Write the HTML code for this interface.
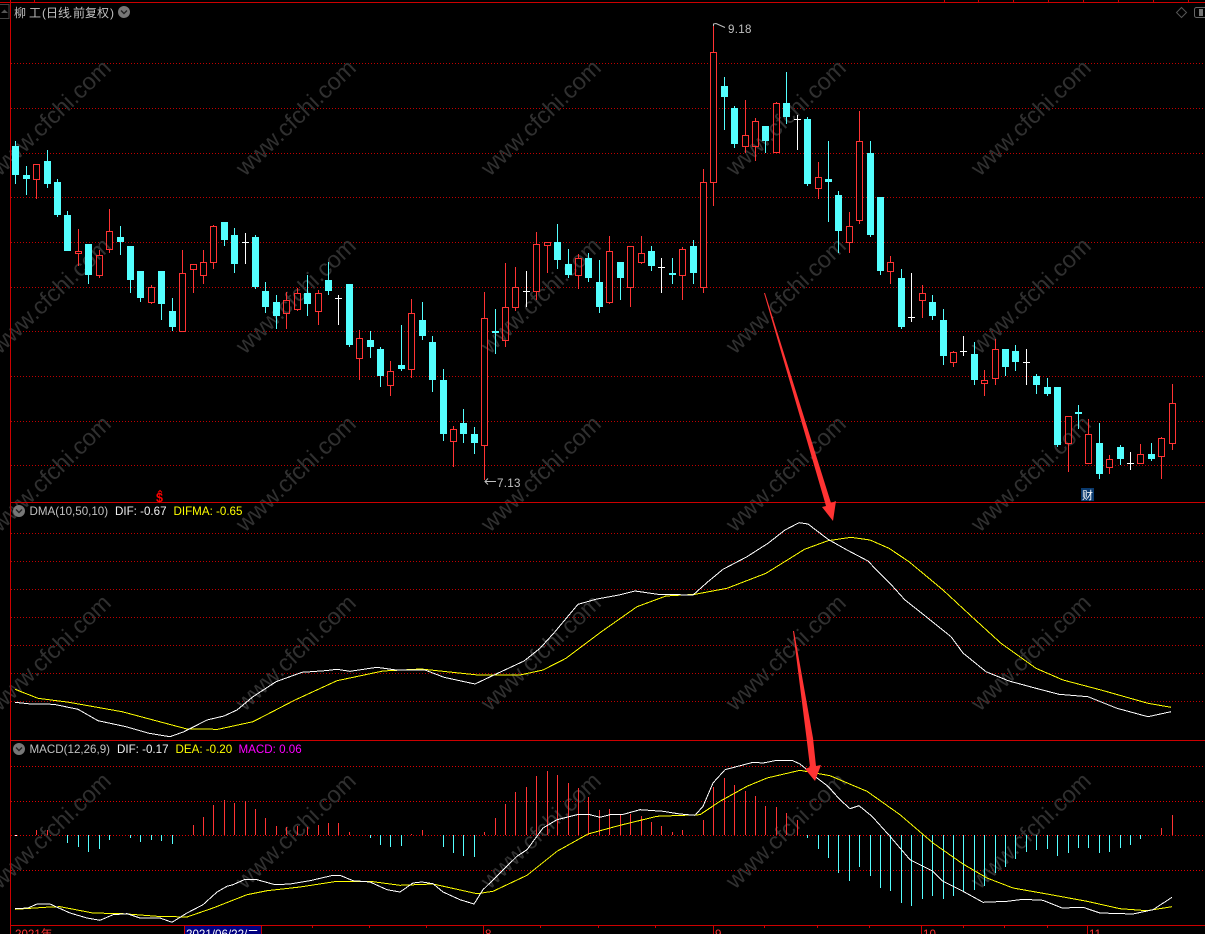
<!DOCTYPE html>
<html><head><meta charset="utf-8"><title>柳工</title>
<style>html,body{margin:0;padding:0;background:#000;overflow:hidden}svg{display:block}
text{font-family:"Liberation Sans","WenQuanYi Zen Hei","Noto Sans CJK SC",sans-serif;font-size:11.6px}
.wm text{font-size:23.5px;fill:#303030}</style></head>
<body>
<svg width="1205" height="934" viewBox="0 0 1205 934" xmlns="http://www.w3.org/2000/svg">
<rect width="1205" height="934" fill="#000"/>
<defs>
<path id="rb" d="M33.5 164.5h6v15h-6zM75.5 251.5h6v2h-6zM96.5 255.5h6v20h-6zM106.5 231.5h6v18h-6zM148.5 287.5h6v15h-6zM179.5 273.5h6v58h-6zM190.5 264.5h6v5h-6zM200.5 262.5h6v13h-6zM210.5 226.5h6v36h-6zM283.5 300.5h6v13h-6zM294.5 293.5h6v16h-6zM315.5 293.5h6v18h-6zM356.5 338.5h6v20h-6zM387.5 371.5h6v14h-6zM408.5 313.5h6v56h-6zM450.5 429.5h6v12h-6zM481.5 318.5h6v127h-6zM502.5 307.5h6v33h-6zM512.5 287.5h6v20h-6zM533.5 244.5h6v47h-6zM544.5 242.5h6v3h-6zM575.5 258.5h6v17h-6zM606.5 251.5h6v51h-6zM627.5 246.5h6v41h-6zM638.5 253.5h6v9h-6zM679.5 249.5h6v26h-6zM700.5 182.5h6v105h-6zM710.5 52.5h6v130h-6zM742.5 135.5h6v11h-6zM752.5 121.5h6v25h-6zM773.5 103.5h6v49h-6zM815.5 177.5h6v11h-6zM846.5 226.5h6v16h-6zM856.5 141.5h6v79h-6zM887.5 262.5h6v9h-6zM919.5 293.5h6v7h-6zM950.5 352.5h6v10h-6zM981.5 380.5h6v3h-6zM992.5 349.5h6v29h-6zM1065.5 416.5h6v27h-6zM1085.5 434.5h6v29h-6zM1106.5 459.5h6v8h-6zM1137.5 454.5h6v9h-6zM1158.5 438.5h6v18h-6zM1169.5 403.5h6v40h-6z"/>
</defs>

<!-- grid -->
<g stroke="#c00000" stroke-width="1" stroke-dasharray="1 2" fill="none" shape-rendering="crispEdges">
<path d="M11 63.5H1205M11 108.5H1205M11 153.5H1205M11 197.5H1205M11 242.5H1205M11 287.5H1205M11 331.5H1205M11 376.5H1205M11 421.5H1205M11 465.5H1205"/>
<path d="M11 533.5H1205M11 561.5H1205M11 589.5H1205M11 617.5H1205M11 645.5H1205M11 673.5H1205M11 701.5H1205"/>
<path stroke="#e00000" d="M11 766.5H1205M11 801.5H1205M11 835.5H1205M11 870.5H1205"/>
</g>

<use href="#rb" fill="#000" stroke="none" shape-rendering="crispEdges"/>

<!-- watermark -->
<g class="wm">
<text x="0" y="177" transform="rotate(-43.7 0 177)">www.cfchi.com</text>
<text x="245" y="177" transform="rotate(-43.7 245 177)">www.cfchi.com</text>
<text x="490" y="177" transform="rotate(-43.7 490 177)">www.cfchi.com</text>
<text x="735" y="177" transform="rotate(-43.7 735 177)">www.cfchi.com</text>
<text x="980" y="177" transform="rotate(-43.7 980 177)">www.cfchi.com</text>
<text x="0" y="355" transform="rotate(-43.7 0 355)">www.cfchi.com</text>
<text x="245" y="355" transform="rotate(-43.7 245 355)">www.cfchi.com</text>
<text x="490" y="355" transform="rotate(-43.7 490 355)">www.cfchi.com</text>
<text x="735" y="355" transform="rotate(-43.7 735 355)">www.cfchi.com</text>
<text x="980" y="355" transform="rotate(-43.7 980 355)">www.cfchi.com</text>
<text x="0" y="533" transform="rotate(-43.7 0 533)">www.cfchi.com</text>
<text x="245" y="533" transform="rotate(-43.7 245 533)">www.cfchi.com</text>
<text x="490" y="533" transform="rotate(-43.7 490 533)">www.cfchi.com</text>
<text x="735" y="533" transform="rotate(-43.7 735 533)">www.cfchi.com</text>
<text x="980" y="533" transform="rotate(-43.7 980 533)">www.cfchi.com</text>
<text x="0" y="712" transform="rotate(-43.7 0 712)">www.cfchi.com</text>
<text x="245" y="712" transform="rotate(-43.7 245 712)">www.cfchi.com</text>
<text x="490" y="712" transform="rotate(-43.7 490 712)">www.cfchi.com</text>
<text x="735" y="712" transform="rotate(-43.7 735 712)">www.cfchi.com</text>
<text x="980" y="712" transform="rotate(-43.7 980 712)">www.cfchi.com</text>
<text x="0" y="890" transform="rotate(-43.7 0 890)">www.cfchi.com</text>
<text x="245" y="890" transform="rotate(-43.7 245 890)">www.cfchi.com</text>
<text x="490" y="890" transform="rotate(-43.7 490 890)">www.cfchi.com</text>
<text x="735" y="890" transform="rotate(-43.7 735 890)">www.cfchi.com</text>
<text x="980" y="890" transform="rotate(-43.7 980 890)">www.cfchi.com</text>
</g>

<!-- candles -->
<g shape-rendering="crispEdges">
<path fill="none" stroke="#54ffff" d="M15.5 141V184M26.5 166V195M47.5 150V188M57.5 179V217M67.5 211V251M88.5 244V284M120.5 226V255M130.5 246V293M140.5 271V302M161.5 271V320M172.5 298V331M224.5 222V246M234.5 228V273M255.5 235V289M265.5 282V313M276.5 295V329M307.5 275V316M328.5 262V295M349.5 284V347M370.5 331V358M380.5 347V387M401.5 325V371M422.5 302V340M432.5 336V392M443.5 369V441M463.5 409V443M474.5 427V454M495.5 309V354M557.5 224V269M568.5 249V278M588.5 253V282M599.5 260V313M620.5 262V300M651.5 246V271M672.5 258V284M693.5 240V284M724.5 77V130M734.5 106V148M765.5 126V153M786.5 72V124M807.5 117V186M828.5 141V222M838.5 191V253M870.5 141V237M880.5 197V275M901.5 269V329M932.5 295V320M943.5 309V365M974.5 342V385M1005.5 349V376M1015.5 345V371M1036.5 374V394M1047.5 378V396M1057.5 387V447M1078.5 405V429M1099.5 423V479M1120.5 445V465M1151.5 443V461"/>
<path fill="#54ffff" d="M12 146h7v29h-7zM23 175h7v4h-7zM44 161h7v23h-7zM54 182h7v33h-7zM64 215h7v36h-7zM85 244h7v31h-7zM117 237h7v5h-7zM127 246h7v34h-7zM137 271h7v27h-7zM158 271h7v33h-7zM169 311h7v16h-7zM221 222h7v18h-7zM231 235h7v29h-7zM252 237h7v50h-7zM262 291h7v16h-7zM273 302h7v14h-7zM304 293h7v11h-7zM325 280h7v11h-7zM346 284h7v61h-7zM367 340h7v7h-7zM377 349h7v27h-7zM398 365h7v4h-7zM419 320h7v16h-7zM429 342h7v38h-7zM440 380h7v54h-7zM460 423h7v11h-7zM471 434h7v9h-7zM492 331h7v2h-7zM554 242h7v18h-7zM565 264h7v11h-7zM585 258h7v20h-7zM596 282h7v25h-7zM617 262h7v16h-7zM648 251h7v15h-7zM669 273h7v2h-7zM690 246h7v27h-7zM721 86h7v11h-7zM731 108h7v36h-7zM762 126h7v15h-7zM783 103h7v14h-7zM804 119h7v65h-7zM825 179h7v3h-7zM835 195h7v36h-7zM867 153h7v82h-7zM877 197h7v74h-7zM898 278h7v49h-7zM929 302h7v14h-7zM940 320h7v36h-7zM971 354h7v26h-7zM1002 349h7v18h-7zM1012 351h7v11h-7zM1033 376h7v9h-7zM1044 387h7v7h-7zM1054 387h7v58h-7zM1075 412h7v2h-7zM1096 443h7v31h-7zM1117 447h7v12h-7zM1148 454h7v5h-7z"/>
<path fill="none" stroke="#ff3333" d="M36.5 180V199M78.5 229V251M78.5 254V266M99.5 250V255M99.5 276V278M109.5 209V231M109.5 250V253M151.5 285V287M151.5 303V304M182.5 250V273M193.5 270V293M203.5 250V262M203.5 276V284M213.5 225V226M213.5 263V269M286.5 292V300M286.5 314V329M297.5 288V293M297.5 310V311M318.5 290V293M318.5 312V325M359.5 330V338M359.5 359V380M390.5 361V371M390.5 386V396M411.5 299V313M411.5 370V378M453.5 426V429M453.5 442V467M484.5 292V318M484.5 446V480M505.5 263V307M505.5 341V347M515.5 267V287M515.5 308V311M536.5 232V244M536.5 292V300M547.5 246V273M578.5 254V258M578.5 276V289M609.5 236V251M609.5 303V304M630.5 288V307M641.5 236V253M641.5 263V264M682.5 247V249M682.5 276V300M703.5 169V182M703.5 288V293M713.5 24V52M713.5 183V206M745.5 100V135M745.5 147V153M755.5 118V121M755.5 147V161M776.5 102V103M818.5 162V177M818.5 189V199M849.5 212V226M849.5 243V253M859.5 111V141M859.5 221V224M890.5 256V262M890.5 272V284M922.5 285V293M922.5 301V318M953.5 351V352M953.5 363V367M984.5 370V380M984.5 384V396M995.5 339V349M995.5 379V385M1068.5 444V472M1088.5 419V434M1109.5 455V459M1109.5 468V474M1140.5 444V454M1161.5 437V438M1161.5 457V479M1172.5 384V403M1172.5 444V450"/>
<use href="#rb" fill="none" stroke="#ff3333"/>
<path fill="none" stroke="#fff" d="M245.5 233V264M242 242.5H249M338.5 295V325M335 298.5H342M526.5 271V307M523 291.5H530M661.5 258V293M658 267.5H665M797.5 115V150M794 119.5H801M911.5 273V322M908 317.5H915M963.5 336V356M960 351.5H967M1026.5 349V385M1023 362.5H1030M1130.5 452V470M1127 463.5H1134"/>
</g>

<!-- MACD bars -->
<g shape-rendering="crispEdges" fill="none">
<path stroke="#ff3333" d="M36.5 835V830M47.5 835V830M193.5 835V825M203.5 835V817M213.5 835V805M224.5 835V800M234.5 835V803M245.5 835V801M255.5 835V809M265.5 835V818M276.5 835V826M286.5 835V827M297.5 835V826M307.5 835V827M318.5 835V825M328.5 835V823M338.5 835V823M349.5 835V832M411.5 835V834M422.5 835V830M484.5 835V832M495.5 835V818M505.5 835V804M515.5 835V792M526.5 835V787M536.5 835V776M547.5 835V771M557.5 835V775M568.5 835V783M578.5 835V788M588.5 835V797M599.5 835V810M609.5 835V809M620.5 835V815M630.5 835V814M641.5 835V816M651.5 835V822M661.5 835V826M672.5 835V832M682.5 835V830M703.5 835V820M713.5 835V787M724.5 835V778M734.5 835V785M745.5 835V791M755.5 835V796M765.5 835V806M776.5 835V807M786.5 835V813M797.5 835V820M1161.5 835V828M1172.5 835V815"/>
<path stroke="#54ffff" d="M67.5 835V843M78.5 835V847M88.5 835V852M99.5 835V849M109.5 835V840M130.5 835V838M140.5 835V842M151.5 835V840M161.5 835V841M172.5 835V844M370.5 835V838M380.5 835V845M390.5 835V847M401.5 835V846M443.5 835V847M453.5 835V853M463.5 835V856M474.5 835V857M807.5 835V838M818.5 835V849M828.5 835V858M838.5 835V873M849.5 835V881M859.5 835V867M870.5 835V876M880.5 835V888M890.5 835V891M901.5 835V903M911.5 835V906M922.5 835V899M932.5 835V896M943.5 835V899M953.5 835V896M963.5 835V892M974.5 835V890M984.5 835V886M995.5 835V873M1005.5 835V867M1015.5 835V859M1026.5 835V852M1036.5 835V850M1047.5 835V849M1057.5 835V856M1068.5 835V853M1078.5 835V848M1088.5 835V848M1099.5 835V853M1109.5 835V852M1120.5 835V848M1130.5 835V845M1140.5 835V839"/>
<path stroke="#fff" d="M15 835.5H17"/>
</g>

<!-- DMA lines -->
<g fill="none" stroke-width="1" stroke-linejoin="round" shape-rendering="crispEdges">
<polyline stroke="#ffff00" points="15,689.3 38,698.3 69,702.3 122,711.7 187,729 218,729.3 253,721.7 295,700 337,680.7 383,671 421,669 478,675 520,675 543,670 566,658.3 600,632.7 637,606.7 666,596 695,594.3 727,588.3 766,573.3 804.5,549.3 828,540.7 851,537.3 870,540 889,548.3 909,561.7 943,590 970,615 1001,643.3 1036,668.3 1063,680 1101,690 1148,703.3 1171,707.3"/>
<polyline stroke="#ffffff" points="15,702.3 31,704 54,704.3 78,709.3 98,720.7 126,726.7 149,733.3 170,736.7 184,731.7 207,720 224,716 237,710 253,696.7 276,681.7 302,672.3 325,670.7 337,669.3 350,671.3 377,667.3 396,670 425,670 444,677.3 475,684 494,675 524,661 540,648.3 555,631.7 578,604.3 597,599 619,595 635,591 658,594.3 693,595 708,581.7 723,569.3 747,556.7 768,543.3 785,530 799,522.7 808,524 828,539.3 847,550 868,561 878,571.7 893,586.7 905,600 924,615 951,636.7 963,653 986,671.7 1009,681 1036,688.3 1059,694.3 1088,696.7 1117,708.3 1148,716.7 1171,711.7"/>
<!-- MACD lines -->
<polyline stroke="#ffff00" points="15,909.3 50,907 60,906.7 93,913 123,913.7 157,916.3 187,917 213,908 247,894.7 267,890.7 300,887 337,881.3 373,881.7 400,885.3 433,884 477,893.7 493,891.3 527,875.3 557,851.3 588,834 620,825.3 657,816.3 700,814.7 720,801.3 747,786.3 767,778 800,770.3 830,775.7 867,791.3 900,814.7 933,843 963,864 987,878 1013,888 1047,894 1087,901.3 1120,908.7 1147,910.7 1172,906.7"/>
<polyline stroke="#ffffff" points="15,908.7 28,908 37,904 50,904 70,913 87,918 100,920.3 113,914.7 127,913.7 140,918 160,918 172,922.3 187,913 203,904.7 217,892 227,886.3 233,884.7 245,879.3 257,879.7 275,884.7 290,884 310,880.7 333,875.3 340,875.3 353,880.7 370,882 387,889.7 400,892 413,883 422,882 433,883.7 443,892 460,899.7 474,904 483,889.7 500,873 517,856.3 527,849.7 543,828 557,819.7 577,814.7 590,814.7 600,817.3 610,814.7 622,814.7 640,809.7 663,811.3 680,814 695,815.3 703,806.3 713,783 725,769.7 753,762.3 763,763 777,760.3 792,760.3 800,764 817,778 828,786.3 840,799.7 850,808.7 859,805.7 872,816.3 890,836.3 910,859.7 932,870.7 943,881.3 963,891.3 983,902.3 1007,901.3 1023,899.3 1043,900.3 1062,908 1083,907.3 1100,913 1133,914 1153,909.7 1172,897.3"/>
</g>

<!-- panel borders -->
<g fill="#cc0000" shape-rendering="crispEdges">
<rect x="0" y="2" width="1205" height="1"/>
<rect x="10" y="0" width="1" height="934"/>
<rect x="10" y="502" width="1195" height="1"/>
<rect x="10" y="740" width="1195" height="1"/>
<rect x="10" y="925" width="1195" height="1"/>
<path d="M34 0h1v2h-1zM944 0h1v2h-1zM978 0h1v2h-1zM1013 0h1v2h-1zM1048 0h1v2h-1zM1083 0h1v2h-1zM1118 0h1v2h-1zM1153 0h1v2h-1zM1188 0h1v2h-1z"/>
<path d="M312 926h1v2h-1zM369 926h1v2h-1zM426 926h1v2h-1zM540 926h1v2h-1zM598 926h1v2h-1zM655 926h1v2h-1zM764 926h1v2h-1zM817 926h1v2h-1zM869 926h1v2h-1zM963 926h1v2h-1zM1004 926h1v2h-1zM1047 926h1v2h-1z"/>
<path d="M483 926h1v8h-1zM713 926h1v8h-1zM921 926h1v8h-1zM1087 926h1v8h-1z"/>
</g>

<!-- date axis -->
<text x="15" y="938" fill="#ff3333">2021年</text>
<rect x="184.500" y="925.5" width="77" height="10" fill="#000080" stroke="#cc0000"/>
<text x="186" y="938" fill="#fff">2021/06/22/二</text>
<text x="485" y="938" fill="#ff3333">8</text>
<text x="715" y="938" fill="#ff3333">9</text>
<text x="923" y="938" fill="#ff3333">10</text>
<text x="1089" y="938" fill="#ff3333">11</text>

<!-- title bar -->
<rect x="-1" y="4.500" width="10" height="14" fill="none" stroke="#444"/>
<path d="M1 13L4.500 9.500L8 13z" fill="#555"/>
<text y="17" fill="#c0c0c0" x="14 29 42 46 58 69 73 85 97 110" style="font-size:12px">柳工(日线.前复权)</text>
<circle cx="124" cy="12" r="6" fill="#777"/>
<path d="M121 10.500L124 13.500L127 10.500" fill="none" stroke="#222" stroke-width="1.400"/>

<path d="M1181.500 7.500L1186.500 12.500L1181.500 17.500L1176.500 12.500z" fill="none" stroke="#555"/>
<rect x="1194.500" y="7.500" width="12" height="10" rx="2" fill="none" stroke="#666"/>
<rect x="1199" y="9" width="4" height="7" fill="#777"/>

<!-- price labels -->
<path d="M713.500 26L713.500 24L716 23.500M716 23.500L725 27.500" fill="none" stroke="#c0c0c0"/>
<text x="728" y="33" fill="#c0c0c0" letter-spacing=".3">9.18</text>
<path d="M496 481.500H485M488 478.500L485 481.500L488 484.500" fill="none" stroke="#c0c0c0"/>
<text x="497" y="487" fill="#c0c0c0" letter-spacing=".3">7.13</text>

<!-- markers -->
<path d="M158 492.500L160 490.500L162 492.500" fill="none" stroke="#f00"/>
<text x="156" y="502" fill="#ff0000" font-weight="bold" style="font-size:12.500px">$</text>
<rect x="1081" y="488" width="13" height="13" fill="#0a3a6e"/>
<text x="1082" y="499" fill="#fff" style="font-size:11px">财</text>

<!-- DMA header -->
<circle cx="19" cy="511" r="6" fill="#777"/>
<path d="M16 509.500L19 512.500L22 509.500" fill="none" stroke="#222" stroke-width="1.400"/>
<text x="29.500" y="515" fill="#c0c0c0">DMA(10,50,10)</text>
<text x="115" y="515" fill="#f0f0f0">DIF: -0.67</text>
<text x="173.500" y="515" fill="#ffff00">DIFMA: -0.65</text>

<!-- MACD header -->
<circle cx="19" cy="749" r="6" fill="#777"/>
<path d="M16 747.500L19 750.500L22 747.500" fill="none" stroke="#222" stroke-width="1.400"/>
<text x="29.500" y="753" fill="#c0c0c0">MACD(12,26,9)</text>
<text x="117" y="753" fill="#f0f0f0">DIF: -0.17</text>
<text x="175.500" y="753" fill="#ffff00">DEA: -0.20</text>
<text x="238.500" y="753" fill="#ff00ff">MACD: 0.06</text>

<!-- annotation arrows -->
<polygon fill="#ff3333" points="764,293 765,293 831,503 836,501 833,521 822,507 826,506"/>
<polygon fill="#ff3333" points="793,631 794,631 813,738 816,766 821,765 815,781 805,769 810,767 806.500,738"/>
</svg>
</body></html>
